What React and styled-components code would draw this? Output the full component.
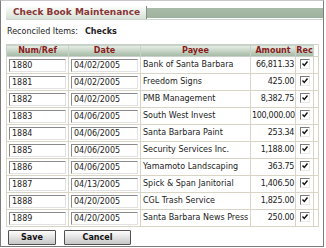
import React from 'react'
import styled, { createGlobalStyle } from 'styled-components'

const GlobalStyle = createGlobalStyle`
  body {
    margin: 0;
    background: #fff;
    font-family: "DejaVu Sans", Verdana, sans-serif;
  }
`

const Frame = styled.div`
  width: 324px;
  height: 247px;
  box-sizing: border-box;
  border: 1px solid #7c7c7c;
  border-top-color: #c8c8c8;
  padding: 0 4px;
`

const TitleRow = styled.div`
  display: flex;
  align-items: center;
  height: 13px;
  margin: 5px -4px 0 1px;
  border-bottom: 1px solid #d0d6d0;
`

const Tab = styled.div`
  width: 141px;
  height: 13px;
  box-sizing: border-box;
  background: linear-gradient(#fbfdfb, #d6e1d6);
  border-right: 1px solid #8c8c8c;
  color: #8a3535;
  font-size: 9px;
  font-weight: bold;
  line-height: 13px;
  padding-left: 7px;
  white-space: nowrap;
`

const Bar = styled.div`
  flex: 1;
  height: 10px;
  background: linear-gradient(#a8bba8, #9db29d);
`

const Info = styled.div`
  font-size: 8px;
  color: #222;
  padding: 7px 0 0 2px;
  height: 24px;
  box-sizing: border-box;
  line-height: 10px;
`

const InfoValue = styled.b`
  margin-left: 7px;
`

const Grid = styled.table`
  border-collapse: collapse;
  table-layout: fixed;
  width: 312px;
  margin-left: 1px;
  font-size: 8px;
`

const Head = styled.th`
  height: 11px;
  padding: 0;
  background: linear-gradient(#e9f0e9, #a3b8a3);
  color: #8b1c1c;
  font-weight: bold;
  font-size: 8px;
  border: 1px solid #c9cfc9;
  text-align: center;
  line-height: 10px;
`

const Row = styled.tr`
  height: 17px;
`

const Cell = styled.td`
  padding: 0 ${p => (p.$align === 'right' ? 1 : 2)}px;
  border: 1px solid #d8d4c6;
  color: #222;
  text-align: ${p => p.$align || 'left'};
  letter-spacing: ${p => (p.$align === 'right' ? '-0.3px' : 'normal')};
  white-space: nowrap;
  overflow: hidden;
  line-height: 14px;
`

const Field = styled.input`
  box-sizing: border-box;
  width: 100%;
  height: 13px;
  font: 8px "DejaVu Sans", Verdana, sans-serif;
  color: #222;
  padding: 0 2px;
  margin: 0;
  border: 1px solid;
  border-color: #8a8a8a #e2e2e2 #e2e2e2 #8a8a8a;
  background: #fff;
  display: block;
`

const Tick = styled.span`
  display: inline-block;
  width: 10px;
  height: 10px;
  box-sizing: border-box;
  border: 1px solid;
  border-color: #7a7a7a #e8e8e8 #e8e8e8 #7a7a7a;
  background: #fff;
  vertical-align: middle;
  position: relative;
  top: -1px;
`

const Buttons = styled.div`
  display: flex;
  gap: 8px;
  padding: 3px 0 0 3px;
`

const Button = styled.button`
  width: ${p => p.$w}px;
  height: 15px;
  box-sizing: border-box;
  padding: 0;
  font: bold 8px "DejaVu Sans", Verdana, sans-serif;
  color: #111;
  background: linear-gradient(#fdfdfd, #c6c6c6);
  border: 1px solid #505050;
  border-radius: 1px;
`

const checks = [
  ['1880', '04/02/2005', 'Bank of Santa Barbara', '66,811.33'],
  ['1881', '04/02/2005', 'Freedom Signs', '425.00'],
  ['1882', '04/02/2005', 'PMB Management', '8,382.75'],
  ['1883', '04/06/2005', 'South West Invest', '100,000.00'],
  ['1884', '04/06/2005', 'Santa Barbara Paint', '253.34'],
  ['1885', '04/06/2005', 'Security Services Inc.', '1,188.00'],
  ['1886', '04/06/2005', 'Yamamoto Landscaping', '363.75'],
  ['1887', '04/13/2005', 'Spick & Span Janitorial', '1,406.50'],
  ['1888', '04/20/2005', 'CGL Trash Service', '1,825.00'],
  ['1889', '04/20/2005', 'Santa Barbara News Press', '250.00'],
]

const CheckMark = () => (
  <Tick>
    <svg width="8" height="8" viewBox="0 0 8 8" style={{ position: 'absolute', left: 0, top: 0 }}>
      <path d="M1.5 3.5 L3.3 5.5 L6.5 1.5" stroke="#111" strokeWidth="1.4" fill="none" />
    </svg>
  </Tick>
)

const App = () => {
  return (
    <Frame>
      <GlobalStyle />
      <TitleRow>
        <Tab>Check Book Maintenance</Tab>
        <Bar />
      </TitleRow>
      <Info>
        Reconciled Items:<InfoValue>Checks</InfoValue>
      </Info>
      <Grid>
        <colgroup>
          <col style={{ width: 62 }} />
          <col style={{ width: 72 }} />
          <col style={{ width: 110 }} />
          <col style={{ width: 45 }} />
          <col style={{ width: 18 }} />
          <col style={{ width: 5 }} />
        </colgroup>
        <thead>
          <tr>
            <Head>Num/Ref</Head>
            <Head>Date</Head>
            <Head>Payee</Head>
            <Head>Amount</Head>
            <Head>Rec</Head>
            <Cell />
          </tr>
        </thead>
        <tbody>
          {checks.map(([num, date, payee, amount]) => (
            <Row key={num}>
              <Cell><Field defaultValue={num} /></Cell>
              <Cell><Field defaultValue={date} /></Cell>
              <Cell>{payee}</Cell>
              <Cell $align="right">{amount}</Cell>
              <Cell $align="center"><CheckMark /></Cell>
              <Cell />
            </Row>
          ))}
        </tbody>
      </Grid>
      <Buttons>
        <Button $w={48}>Save</Button>
        <Button $w={67}>Cancel</Button>
      </Buttons>
    </Frame>
  )
}

export default App
